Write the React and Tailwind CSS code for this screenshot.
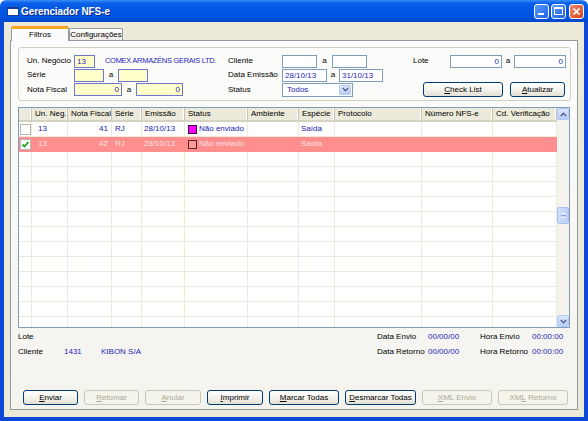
import React from 'react';

const blue = 'text-[#2626b8]';
const yellow = 'bg-[#ffffcc] border-[#6f78c8]';
const white = 'bg-white border-[#7f9db9]';

function Field({ className = '', children }) {
  return (
    <div className={`h-[13px] shrink-0 border px-[2px] leading-[11px] whitespace-nowrap overflow-hidden ${blue} ${className}`}>
      {children}
    </div>
  );
}

function Btn({ className = '', disabled, children }) {
  return (
    <div
      className={`h-[15px] shrink-0 rounded-[3px] border flex items-center justify-center leading-none ${
        disabled
          ? 'border-[#c9c7ba] bg-[#f5f4ea] text-[#aca899]'
          : 'border-[#003c74] bg-linear-to-b from-white via-[#f4f3ee] to-[#e3e0d3] text-black'
      } ${className}`}
    >
      <span className="whitespace-pre">{children}</span>
    </div>
  );
}

const U = ({ children }) => <span className="underline underline-offset-[1px]">{children}</span>;

const cols = [
  { w: 'w-[13px]', h: '' },
  { w: 'w-[36px]', h: 'Un. Neg.' },
  { w: 'w-[44px]', h: 'Nota Fiscal' },
  { w: 'w-[30px]', h: 'Série' },
  { w: 'w-[43px]', h: 'Emissão' },
  { w: 'w-[63px]', h: 'Status' },
  { w: 'w-[51px]', h: 'Ambiente' },
  { w: 'w-[36px]', h: 'Espécie' },
  { w: 'w-[87px]', h: 'Protocolo' },
  { w: 'w-[71px]', h: 'Número NFS-e' },
  { w: 'w-[64px]', h: 'Cd. Verificação' },
];

function CheckBox({ checked }) {
  return (
    <div className="w-[11px] h-[11px] border border-[#b8b8b0] bg-white flex items-center justify-center">
      {checked && (
        <svg width="9" height="9" viewBox="0 0 9 9">
          <path d="M1.5 4.5 L3.5 6.5 L7.5 2" fill="none" stroke="#21a121" strokeWidth="1.8" />
        </svg>
      )}
    </div>
  );
}

function DataRow({ row }) {
  const sel = row && row.selected;
  const txt = sel ? 'text-[#ffe0e0]' : 'text-[#2020b0]';
  const cell = `h-[15px] shrink-0 border-r border-b ${sel ? 'border-[#ff8e8e]' : 'border-[#eceadd]'} flex items-center whitespace-nowrap overflow-hidden`;
  return (
    <div className={`flex ${sel ? 'bg-[#ff8e8e]' : 'bg-white'} ${txt}`}>
      <div className={`${cell} w-[13px] justify-center`}>{row && <CheckBox checked={sel} />}</div>
      <div className={`${cell} w-[36px] pl-[6px]`}>{row && '13'}</div>
      <div className={`${cell} w-[44px] justify-end pr-[3px]`}>{row && row.nf}</div>
      <div className={`${cell} w-[30px] pl-[3px]`}>{row && 'RJ'}</div>
      <div className={`${cell} w-[43px] pl-[2px]`}>{row && '28/10/13'}</div>
      <div className={`${cell} w-[63px] pl-[3px] gap-[2px]`}>
        {row && (
          <>
            <span
              className={`w-[9px] h-[9px] border ${sel ? 'border-[#5a2424] bg-[#ff9a9a]' : 'border-[#3a003a] bg-[#ff00ff]'}`}
            />
            <span>Não enviado</span>
          </>
        )}
      </div>
      <div className={`${cell} w-[51px]`} />
      <div className={`${cell} w-[36px] pl-[2px]`}>{row && 'Saída'}</div>
      <div className={`${cell} w-[87px]`} />
      <div className={`${cell} w-[71px]`} />
      <div className={`${cell} w-[64px]`} />
    </div>
  );
}

function ScrollArrow({ up }) {
  return (
    <div className="w-[12px] h-[12px] rounded-[2px] border border-[#b4c8f6] bg-linear-to-b from-[#dbe6fe] to-[#b8cdfa] flex items-center justify-center">
      <svg width="7" height="5" viewBox="0 0 7 5">
        <path d={up ? 'M0.8 4 L3.5 1.2 L6.2 4' : 'M0.8 1 L3.5 3.8 L6.2 1'} fill="none" stroke="#4d6185" strokeWidth="1.4" />
      </svg>
    </div>
  );
}

export default function App() {
  const rows = [{ nf: '41', selected: false }, { nf: '42', selected: true }];
  const empty = Array.from({ length: 12 });

  return (
    <div className="w-[588px] h-[421px] overflow-hidden flex flex-col font-['Liberation_Sans',Arial,sans-serif] text-[8px] text-black select-none">
      {/* Title bar */}
      <div className="h-[22px] shrink-0 flex items-center pl-[7px] pr-[4px] rounded-t-[6px] bg-[linear-gradient(to_bottom,#3d8ef8_0%,#0a60e9_14%,#0055e2_50%,#0052df_82%,#0044c8_100%)]">
        <div className="w-[12px] h-[9px] bg-white border border-[#1a3a8c] border-t-[2px]" />
        <span className="ml-[2px] text-white font-bold text-[10px] tracking-[-0.1px] [text-shadow:1px_1px_0_#0a2a8a]">
          Gerenciador NFS-e
        </span>
        <div className="ml-auto flex items-center gap-[2px]">
          <div className="w-[15px] h-[15px] rounded-[3px] border border-white bg-linear-to-br from-[#5a9cff] to-[#1f5fe2] flex items-end pl-[3px] pb-[3px]">
            <div className="w-[6px] h-[2px] bg-white" />
          </div>
          <div className="w-[15px] h-[15px] rounded-[3px] border border-white bg-linear-to-br from-[#5a9cff] to-[#1f5fe2] flex items-center justify-center">
            <div className="w-[9px] h-[8px] border border-white border-t-[2px]" />
          </div>
          <div className="ml-[1px] w-[15px] h-[15px] rounded-[3px] border border-white bg-linear-to-br from-[#f08a68] to-[#d2441c] flex items-center justify-center">
            <svg width="9" height="9" viewBox="0 0 9 9">
              <path d="M1.5 1.5 L7.5 7.5 M7.5 1.5 L1.5 7.5" stroke="white" strokeWidth="1.7" />
            </svg>
          </div>
        </div>
      </div>

      {/* Window body */}
      <div className="flex-1 flex flex-col bg-[#ece9d8] border-x-[4px] border-b-[4px] border-[#0b48d6] px-[6px] pt-[4px] pb-[7px]">
        {/* Tabs */}
        <div className="flex items-end h-[15px] -mb-[1px] relative z-10">
          <div className="ml-[1px] w-[58px] h-[15px] flex items-center justify-center bg-[#fcfcfe] border-x border-[#919b9c] border-t-[3px] border-t-[#f5a623] rounded-t-[2px]">
            Filtros
          </div>
          <div className="w-[54px] h-[12px] mb-[1px] flex items-center justify-center bg-linear-to-b from-white to-[#ecebe6] border border-b-0 border-[#919b9c] rounded-t-[2px] whitespace-nowrap">
            Configurações
          </div>
        </div>

        {/* Tab page */}
        <div className="flex-1 flex flex-col border border-[#919b9c] bg-linear-to-b from-[#fcfcfe] to-[#f4f3ee] pl-[7px] pr-[6px] pt-[6px] pb-[4px]">
          {/* Filters group */}
          <div className="h-[54px] shrink-0 border border-[#d0d0bf] rounded-[3px] bg-[#fbfbf9] pl-[8px] pt-[6px]">
            <div className="flex items-center h-[14px]">
              <span className="w-[47px] shrink-0">Un. Negócio</span>
              <Field className={`w-[21px] ${yellow}`}>13</Field>
              <span className={`ml-[10px] w-[114px] shrink-0 whitespace-nowrap text-[7.5px] tracking-[-0.3px] ${blue}`}>
                COMEX ARMAZÉNS GERAIS LTD.
              </span>
              <span className="ml-[9px] w-[54px] shrink-0">Cliente</span>
              <Field className={`w-[35px] ${white}`} />
              <span className="w-[15px] shrink-0 text-center">a</span>
              <Field className={`w-[35px] ${white}`} />
              <span className="ml-[46px] w-[37px] shrink-0">Lote</span>
              <Field className={`w-[52px] text-right ${white}`}>0</Field>
              <span className="w-[12px] shrink-0 text-center">a</span>
              <Field className={`w-[52px] text-right ${white}`}>0</Field>
            </div>
            <div className="flex items-center h-[14px]">
              <span className="w-[47px] shrink-0">Série</span>
              <Field className={`w-[30px] ${yellow}`} />
              <span className="w-[14px] shrink-0 text-center">a</span>
              <Field className={`w-[30px] ${yellow}`} />
              <span className="ml-[80px] w-[54px] shrink-0">Data Emissão</span>
              <Field className={`w-[45px] ${white}`}>28/10/13</Field>
              <span className="w-[12px] shrink-0 text-center">a</span>
              <Field className={`w-[44px] ${white}`}>31/10/13</Field>
            </div>
            <div className="flex items-center h-[15px]">
              <span className="w-[47px] shrink-0">Nota Fiscal</span>
              <Field className={`w-[48px] text-right ${yellow}`}>0</Field>
              <span className="w-[14px] shrink-0 text-center">a</span>
              <Field className={`w-[47px] text-right ${yellow}`}>0</Field>
              <span className="ml-[45px] w-[54px] shrink-0">Status</span>
              <div className="w-[71px] h-[14px] shrink-0 border border-[#7f9db9] bg-white flex items-center p-[1px]">
                <span className={`flex-1 pl-[3px] ${blue}`}>Todos</span>
                <div className="w-[12px] h-full rounded-[1px] border border-[#b4c8f6] bg-linear-to-b from-[#dbe6fe] to-[#b8cdfa] flex items-center justify-center">
                  <svg width="7" height="5" viewBox="0 0 7 5">
                    <path d="M0.8 1 L3.5 3.8 L6.2 1" fill="none" stroke="#4d6185" strokeWidth="1.4" />
                  </svg>
                </div>
              </div>
              <Btn className="ml-[70px] w-[80px] h-[14px]">
                <U>C</U>heck List
              </Btn>
              <Btn className="ml-[7px] w-[55px] h-[14px]">
                <U>A</U>tualizar
              </Btn>
            </div>
          </div>

          {/* Grid */}
          <div className="mt-[6px] w-[552px] h-[221px] shrink-0 border border-[#7f9db9] bg-white flex overflow-hidden">
            <div className="w-[538px] flex flex-col overflow-hidden">
              <div className="flex h-[14px] shrink-0 bg-[#ebeadb] border-b-2 border-[#d6d2c2]">
                {cols.map((c, i) => (
                  <div
                    key={i}
                    className={`${c.w} shrink-0 h-full pl-[3px] flex items-center whitespace-nowrap overflow-hidden border-r border-[#c7c5b2] shadow-[inset_-1px_0_0_#fff]`}
                  >
                    {c.h}
                  </div>
                ))}
              </div>
              {rows.map((r, i) => (
                <DataRow key={i} row={r} />
              ))}
              {empty.map((_, i) => (
                <DataRow key={`e${i}`} />
              ))}
            </div>
            <div className="w-[12px] shrink-0 flex flex-col bg-[#f4f3ee]">
              <ScrollArrow up />
              <div className="flex-1">
                <div className="mt-[87px] w-[12px] h-[17px] rounded-[2px] border border-[#a9bfee] bg-linear-to-r from-[#cfdcfd] to-[#bfd0fb] flex flex-col items-center justify-center gap-[1px]">
                  <div className="w-[5px] h-[1px] bg-[#eef3ff]" />
                  <div className="w-[5px] h-[1px] bg-[#8ca6e6]" />
                  <div className="w-[5px] h-[1px] bg-[#eef3ff]" />
                </div>
              </div>
              <ScrollArrow />
            </div>
          </div>

          {/* Info */}
          <div className="mt-[1px] flex">
            <div className="w-[359px] shrink-0">
              <div className="h-[15px] flex items-center">Lote</div>
              <div className="h-[15px] flex items-center">
                <span className="w-[46px] shrink-0">Cliente</span>
                <span className={`w-[37px] shrink-0 ${blue}`}>1431</span>
                <span className={blue}>KIBON S/A</span>
              </div>
            </div>
            <div>
              <div className="h-[15px] flex items-center">
                <span className="w-[51px] shrink-0">Data Envio</span>
                <span className={`w-[52px] shrink-0 ${blue}`}>00/00/00</span>
                <span className="w-[52px] shrink-0">Hora Envio</span>
                <span className={blue}>00:00:00</span>
              </div>
              <div className="h-[15px] flex items-center">
                <span className="w-[51px] shrink-0 whitespace-nowrap">Data Retorno</span>
                <span className={`w-[52px] shrink-0 ${blue}`}>00/00/00</span>
                <span className="w-[52px] shrink-0 whitespace-nowrap">Hora Retorno</span>
                <span className={blue}>00:00:00</span>
              </div>
            </div>
          </div>

          {/* Buttons */}
          <div className="mt-auto flex pl-[5px] gap-[6px]">
            <Btn className="w-[55px]"><U>E</U>nviar</Btn>
            <Btn className="w-[55px]" disabled><U>R</U>etomar</Btn>
            <Btn className="w-[56px]" disabled><U>A</U>nular</Btn>
            <Btn className="w-[56px]"><U>I</U>mprimir</Btn>
            <Btn className="w-[70px]"><U>M</U>arcar Todas</Btn>
            <Btn className="w-[71px]"><U>D</U>esmarcar Todas</Btn>
            <Btn className="w-[70px]" disabled><U>X</U>ML Envio</Btn>
            <Btn className="w-[70px]" disabled>XM<U>L</U> Retorno</Btn>
          </div>
        </div>
      </div>
    </div>
  );
}
